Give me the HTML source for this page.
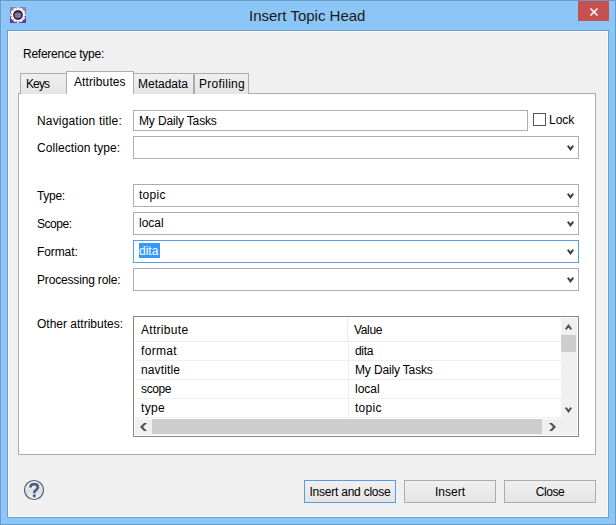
<!DOCTYPE html>
<html><head><meta charset="utf-8"><style>
*{margin:0;padding:0;box-sizing:border-box}
html,body{width:616px;height:525px;overflow:hidden}
body{position:relative;background:#8cc6f7;font-family:"Liberation Sans",sans-serif;font-size:12px;color:#000}
.a{position:absolute}
.t{position:absolute;font-size:12px;line-height:14px;white-space:pre;color:#000}
.combo{position:absolute;left:133px;width:446px;height:23px;background:#fff;border:1px solid #acadb3}
.chev{position:absolute;left:433px;top:8px}
.btn{position:absolute;top:480px;width:92px;height:23px;border:1px solid #acacac;background:linear-gradient(#f0f0f0,#e5e5e5);text-align:center;line-height:21px;padding-top:1px;font-size:12px}
.tab{position:absolute;top:73px;height:21px;border:1px solid #acacac;border-bottom:none;background:linear-gradient(#f0f0f0,#e5e5e5)}
</style></head><body>
<!-- window frame -->
<div class="a" style="left:0;top:0;width:616px;height:525px;border:1px solid #6b98c4"></div>
<div class="a" style="left:1px;top:1px;width:614px;height:523px;border:1px solid #90cbfc;border-right:none;border-bottom:none"></div>
<!-- client -->
<div class="a" style="left:7px;top:30px;width:602px;height:488px;border:1px solid #6d9fd0;background:#f8f8f4"></div>
<div class="a" style="left:9px;top:32px;width:598px;height:484px;background:#f0f0f0"></div>
<!-- icon -->
<svg class="a" style="left:10px;top:7px" width="16" height="16" viewBox="0 0 16 16">
<defs><linearGradient id="ig" x1="0" y1="0" x2="0" y2="1"><stop offset="0" stop-color="#8e84b0"/><stop offset="0.5" stop-color="#7c66a8"/><stop offset="0.52" stop-color="#6c40a4"/><stop offset="1" stop-color="#6432a0"/></linearGradient>
<linearGradient id="ic" x1="0" y1="0" x2="0" y2="1"><stop offset="0" stop-color="#3a3050"/><stop offset="0.3" stop-color="#6a6088"/><stop offset="0.45" stop-color="#9088b0"/><stop offset="0.55" stop-color="#7a6aa0"/><stop offset="0.7" stop-color="#8a78b8"/><stop offset="1" stop-color="#4a3870"/></linearGradient></defs>
<rect width="16" height="16" fill="url(#ig)"/>
<g fill="#fff"><circle cx="8" cy="8" r="6"/>
<rect x="6.6" y="0.4" width="2.8" height="3"/>
<rect x="6.6" y="0.4" width="2.8" height="3" transform="rotate(30 8 8)"/><rect x="6.6" y="0.4" width="2.8" height="3" transform="rotate(60 8 8)"/><rect x="6.6" y="0.4" width="2.8" height="3" transform="rotate(90 8 8)"/><rect x="6.6" y="0.4" width="2.8" height="3" transform="rotate(120 8 8)"/><rect x="6.6" y="0.4" width="2.8" height="3" transform="rotate(150 8 8)"/><rect x="6.6" y="0.4" width="2.8" height="3" transform="rotate(180 8 8)"/><rect x="6.6" y="0.4" width="2.8" height="3" transform="rotate(210 8 8)"/><rect x="6.6" y="0.4" width="2.8" height="3" transform="rotate(240 8 8)"/><rect x="6.6" y="0.4" width="2.8" height="3" transform="rotate(270 8 8)"/><rect x="6.6" y="0.4" width="2.8" height="3" transform="rotate(300 8 8)"/><rect x="6.6" y="0.4" width="2.8" height="3" transform="rotate(330 8 8)"/></g>
<circle cx="8" cy="8" r="4.2" fill="url(#ic)" stroke="#111" stroke-width="1.3"/>
</svg>
<!-- title -->
<div class="a" style="left:249px;top:7px;font-size:15px;line-height:18px;white-space:pre;color:#1a1a1a">Insert Topic Head</div>
<!-- close -->
<div class="a" style="left:578px;top:1px;width:31px;height:20px;background:#c75050"></div>
<svg class="a" style="left:589px;top:7px" width="10" height="10" viewBox="0 0 10 10"><path d="M1.5 1.5L8.5 8.5M8.5 1.5L1.5 8.5" stroke="#fff" stroke-width="1.6"/></svg>

<div class="t" style="left:23px;top:47px;letter-spacing:-0.25px">Reference type:</div>

<!-- tab pane -->
<div class="a" style="left:18px;top:93px;width:578px;height:362px;border:1px solid #acacac;background:#fff"></div>
<div class="tab" style="left:20px;width:47px"></div>
<div class="tab" style="left:133px;width:61px"></div>
<div class="tab" style="left:194px;width:55px"></div>
<div class="a" style="left:66px;top:71px;width:68px;height:23px;border:1px solid #acacac;border-bottom:none;background:#fff"></div>
<div class="t" style="left:26px;top:77px;letter-spacing:-0.9px">Keys</div>
<div class="t" style="left:74px;top:75px;letter-spacing:0.1px">Attributes</div>
<div class="t" style="left:138px;top:77px">Metadata</div>
<div class="t" style="left:199px;top:77px;letter-spacing:0.3px">Profiling</div>

<!-- labels -->
<div class="t" style="left:37px;top:114px;letter-spacing:0.17px">Navigation title:</div>
<div class="t" style="left:37px;top:141px;letter-spacing:0.07px">Collection type:</div>
<div class="t" style="left:37px;top:189px;letter-spacing:-0.3px">Type:</div>
<div class="t" style="left:37px;top:217px;letter-spacing:-0.45px">Scope:</div>
<div class="t" style="left:37px;top:245px;letter-spacing:-0.1px">Format:</div>
<div class="t" style="left:37px;top:273px;letter-spacing:-0.17px">Processing role:</div>
<div class="t" style="left:37px;top:317px">Other attributes:</div>

<!-- nav title field -->
<div class="a" style="left:133px;top:110px;width:395px;height:21px;background:#fff;border:1px solid #acadb3"></div>
<div class="t" style="left:139px;top:114px;letter-spacing:-0.15px">My Daily Tasks</div>
<div class="a" style="left:533px;top:113px;width:13px;height:13px;border:1px solid #555;background:#fff"></div>
<div class="t" style="left:549px;top:113px">Lock</div>

<!-- combos -->
<div class="combo" style="top:136px"><svg class="chev" width="7" height="6" viewBox="0 0 7 6"><path d="M0 1.2L1.3 0L3.5 2.4L5.7 0L7 1.2L3.5 6Z" fill="#404040"/></svg></div>
<div class="combo" style="top:184px"><svg class="chev" width="7" height="6" viewBox="0 0 7 6"><path d="M0 1.2L1.3 0L3.5 2.4L5.7 0L7 1.2L3.5 6Z" fill="#404040"/></svg></div>
<div class="t" style="left:139px;top:188px;letter-spacing:0.27px">topic</div>
<div class="combo" style="top:212px"><svg class="chev" width="7" height="6" viewBox="0 0 7 6"><path d="M0 1.2L1.3 0L3.5 2.4L5.7 0L7 1.2L3.5 6Z" fill="#404040"/></svg></div>
<div class="t" style="left:139px;top:216px">local</div>
<div class="combo" style="top:240px;border-color:#569de5"><svg class="chev" width="7" height="6" viewBox="0 0 7 6"><path d="M0 1.2L1.3 0L3.5 2.4L5.7 0L7 1.2L3.5 6Z" fill="#404040"/></svg></div>
<div class="a" style="left:139px;top:243px;width:21px;height:15px;background:#3399ff"></div>
<div class="t" style="left:139px;top:244px;color:#fff">dita</div>
<div class="combo" style="top:268px"><svg class="chev" width="7" height="6" viewBox="0 0 7 6"><path d="M0 1.2L1.3 0L3.5 2.4L5.7 0L7 1.2L3.5 6Z" fill="#404040"/></svg></div>

<!-- table -->
<div class="a" style="left:133px;top:316px;width:446px;height:121px;border:1px solid #828790;background:#fff"></div>
<div class="a" style="left:347px;top:318px;width:1px;height:23px;background:#e3ecf7"></div>
<div class="a" style="left:135px;top:341px;width:426px;height:1px;background:#e3ecf7"></div>
<div class="a" style="left:135px;top:360px;width:426px;height:1px;background:#f0f0f0"></div>
<div class="a" style="left:135px;top:379px;width:426px;height:1px;background:#f0f0f0"></div>
<div class="a" style="left:135px;top:398px;width:426px;height:1px;background:#f0f0f0"></div>
<div class="a" style="left:135px;top:417px;width:426px;height:1px;background:#f0f0f0"></div>
<div class="a" style="left:348px;top:342px;width:1px;height:75px;background:#f0f0f0"></div>
<div class="t" style="left:141px;top:323px;letter-spacing:0.3px">Attribute</div>
<div class="t" style="left:354px;top:323px;letter-spacing:-0.35px">Value</div>
<div class="t" style="left:141px;top:344px;letter-spacing:0.34px">format</div>
<div class="t" style="left:355px;top:344px;letter-spacing:-0.33px">dita</div>
<div class="t" style="left:141px;top:363px;letter-spacing:0.13px">navtitle</div>
<div class="t" style="left:355px;top:363px;letter-spacing:-0.15px">My Daily Tasks</div>
<div class="t" style="left:141px;top:382px;letter-spacing:-0.37px">scope</div>
<div class="t" style="left:355px;top:382px">local</div>
<div class="t" style="left:141px;top:401px;letter-spacing:0.3px">type</div>
<div class="t" style="left:355px;top:401px;letter-spacing:0.27px">topic</div>
<!-- v scroll -->
<div class="a" style="left:561px;top:318px;width:16px;height:117px;background:#f0f0f0"></div>
<div class="a" style="left:561px;top:335px;width:15px;height:17px;background:#cdcdcd"></div>
<svg class="a" style="left:565px;top:324px" width="7" height="6" viewBox="0 0 7 6"><path d="M0 4.8L1.3 6L3.5 3.6L5.7 6L7 4.8L3.5 0Z" fill="#505050"/></svg>
<svg class="a" style="left:565px;top:407px" width="7" height="6" viewBox="0 0 7 6"><path d="M0 1.2L1.3 0L3.5 2.4L5.7 0L7 1.2L3.5 6Z" fill="#505050"/></svg>
<!-- h scroll -->
<div class="a" style="left:135px;top:419px;width:426px;height:16px;background:#f0f0f0"></div>
<div class="a" style="left:152px;top:419px;width:390px;height:15px;background:#cdcdcd"></div>
<svg class="a" style="left:140px;top:423px" width="7" height="8" viewBox="0 0 7 8"><path d="M7 0L4 0L0 4L4 8L7 8L3 4Z" fill="#505050"/></svg>
<svg class="a" style="left:549px;top:423px" width="7" height="8" viewBox="0 0 7 8"><path d="M0 0L3 0L7 4L3 8L0 8L4 4Z" fill="#505050"/></svg>

<!-- help -->
<svg class="a" style="left:23px;top:479px" width="22" height="22" viewBox="0 0 22 22">
<defs><linearGradient id="hg" x1="0" y1="0" x2="0" y2="1"><stop offset="0" stop-color="#f8f8f8"/><stop offset="0.55" stop-color="#dedede"/><stop offset="1" stop-color="#f4f4f4"/></linearGradient></defs>
<circle cx="11" cy="11" r="9.5" fill="url(#hg)" stroke="#4a5f82" stroke-width="1.2"/>
<path d="M7.4 8.5C7.4 6 9.1 5.1 11.1 5.1C13.3 5.1 14.9 6.3 14.9 8.2C14.9 10.6 11.3 11 11.3 13.7L11.3 14.2" fill="none" stroke="#4a5f82" stroke-width="2.7"/><circle cx="11.3" cy="16.8" r="1.6" fill="#4a5f82"/>
</svg>

<!-- buttons -->
<div class="btn" style="left:304px;border-color:#569de5;letter-spacing:-0.23px">Insert and close</div>
<div class="btn" style="left:404px">Insert</div>
<div class="btn" style="left:504px;letter-spacing:-0.4px">Close</div>
</body></html>
